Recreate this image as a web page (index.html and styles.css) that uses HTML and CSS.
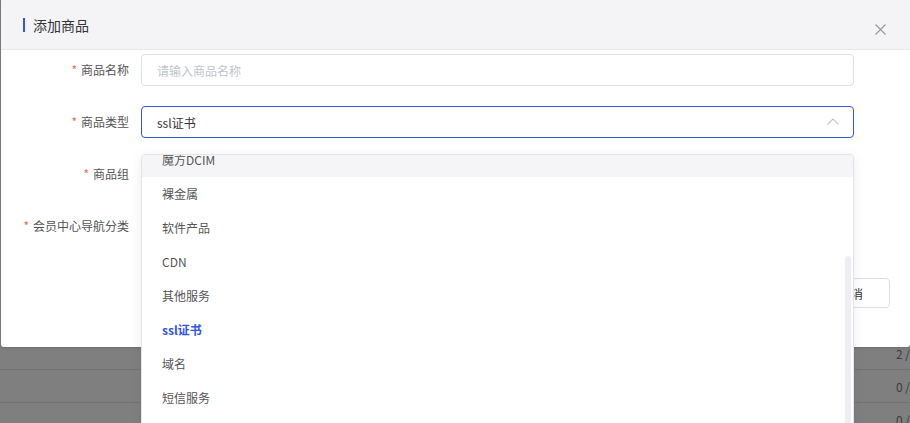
FILE: index.html
```html
<!DOCTYPE html>
<html lang="zh-CN">
<head>
<meta charset="utf-8">
<title>添加商品</title>
<link rel="stylesheet" href="styles.css">
</head>
<body>
<div class="page">
  <div class="bg-row"><span>2 /</span></div>
  <div class="bg-row"><span>0 /</span></div>
  <div class="bg-row"><span>0 /</span></div>
</div>

<div class="modal">
  <div class="modal-header">
    <span class="modal-title">添加商品</span>
    <span class="modal-close">
      <svg width="11" height="11" viewBox="0 0 11 11"><path d="M0.5 0.5 L10.5 10.5 M10.5 0.5 L0.5 10.5" stroke="#9a9a9a" stroke-width="1.2" fill="none"/></svg>
    </span>
  </div>
  <div class="modal-body">
    <div class="form-row">
      <label class="form-label"><span class="req">*</span>商品名称</label>
      <div class="input"><span class="placeholder">请输入商品名称</span></div>
    </div>
    <div class="form-row">
      <label class="form-label"><span class="req">*</span>商品类型</label>
      <div class="input input-focus">
        <span class="value">ssl证书</span>
        <svg class="chev" width="12" height="7" viewBox="0 0 12 7"><path d="M0.5 6.5 L6 1 L11.5 6.5" stroke="#c0c4cc" stroke-width="1.1" fill="none"/></svg>
      </div>
    </div>
    <div class="form-row">
      <label class="form-label"><span class="req">*</span>商品组</label>
      <div class="input"></div>
    </div>
    <div class="form-row">
      <label class="form-label"><span class="req">*</span>会员中心导航分类</label>
      <div class="input"></div>
    </div>
    <div class="modal-footer">
      <button class="btn btn-primary">确定</button>
      <button class="btn">取消</button>
    </div>
  </div>
</div>

<div class="dropdown">
  <div class="dropdown-arrow"></div>
  <div class="dropdown-panel">
    <ul class="dropdown-list">
      <li class="item hover">魔方DCIM</li>
      <li class="item">裸金属</li>
      <li class="item">软件产品</li>
      <li class="item">CDN</li>
      <li class="item">其他服务</li>
      <li class="item selected">ssl证书</li>
      <li class="item">域名</li>
      <li class="item">短信服务</li>
    </ul>
    <div class="scrollbar"></div>
  </div>
</div>
</body>
</html>
```
FILE: styles.css
```css
html, body {
  margin: 0;
  padding: 0;
  height: 100%;
  overflow: hidden;
}
body {
  background: #7f7f7f;
  font-family: "Noto Sans CJK SC", "Noto Sans", sans-serif;
  font-size: 12px;
  color: #555;
}
.page {
  padding-top: 337px;
}
.bg-row {
  height: 32px;
  border-bottom: 1px solid #737373;
  padding-left: 896px;
  white-space: nowrap;
  overflow: hidden;
  line-height: 34px;
  color: #3c3c3c;
  font-size: 12px;
}

.modal {
  position: absolute;
  left: 1px;
  top: 0;
  width: 909px;
  height: 347px;
  background: #fff;
  border-radius: 0 0 3px 3px;
  box-shadow: 0 1px 3px rgba(0,0,0,.15);
}
.modal-header {
  height: 49px;
  background: #f4f4f6;
  border-bottom: 1px solid #e9e9ed;
  display: flex;
  align-items: center;
  padding: 0 24px 0 22px;
}
.modal-title {
  font-size: 14px;
  color: #333;
  display: flex;
  align-items: center;
  margin-top: 1px;
}
.modal-title::before {
  content: "";
  width: 2px;
  height: 14px;
  background: #2f54e6;
  margin-right: 8px;
}
.modal-close {
  margin-left: auto;
  margin-top: 9px;
  display: flex;
}
.modal-body {
  padding: 4px 56px 0 0;
}
.form-row {
  display: grid;
  grid-template-columns: 128px 1fr;
  column-gap: 12px;
  margin-bottom: 20px;
}
.form-label {
  text-align: right;
  line-height: 32px;
  color: #555;
  white-space: nowrap;
}
.req {
  color: #ef6b4d;
  margin-right: 4px;
}
.input {
  height: 30px;
  border: 1px solid #dfdfe6;
  border-radius: 4px;
  display: flex;
  align-items: center;
  padding: 0 14px 0 15px;
}
.input-focus {
  border-color: #2f54e6;
}
.placeholder {
  color: #c0c4cc;
}
.value {
  color: #333;
}
.chev {
  margin-left: auto;
  margin-top: -1px;
}
.modal-footer {
  display: flex;
  justify-content: flex-end;
  gap: 10px;
  margin-top: 36px;
  margin-right: -36px;
}
.btn {
  height: 30px;
  padding: 0 26px 0 24px;
  border: 1px solid #dcdfe6;
  border-radius: 4px;
  background: #fff;
  font-family: inherit;
  font-size: 12px;
  color: #333;
}
.btn-primary {
  background: #2f54e6;
  border-color: #2f54e6;
  color: #fff;
}

.dropdown {
  position: absolute;
  left: 141px;
  top: 154px;
  width: 713px;
}
.dropdown-arrow {
  position: absolute;
  left: 36px;
  top: -6px;
  width: 0;
  height: 0;
  border-left: 6px solid transparent;
  border-right: 6px solid transparent;
  border-bottom: 6px solid #fff;
}
.dropdown-panel {
  position: relative;
  height: 290px;
  background: #fff;
  border: 1px solid #e4e4ea;
  border-radius: 4px;
  box-shadow: 0 2px 12px rgba(0,0,0,.08);
  overflow: hidden;
}
.dropdown-list {
  list-style: none;
  margin: -12px 0 0;
  padding: 0;
}
.item {
  height: 34px;
  line-height: 34px;
  padding-left: 20px;
  color: #555;
  font-size: 12px;
}
.item.hover {
  background: #f5f5f8;
}
.item.selected {
  color: #2f54e6;
  font-weight: bold;
}
.scrollbar {
  position: absolute;
  right: 2px;
  top: 101px;
  width: 6px;
  height: 200px;
  border-radius: 3px;
  background: #eeeef2;
}
```
